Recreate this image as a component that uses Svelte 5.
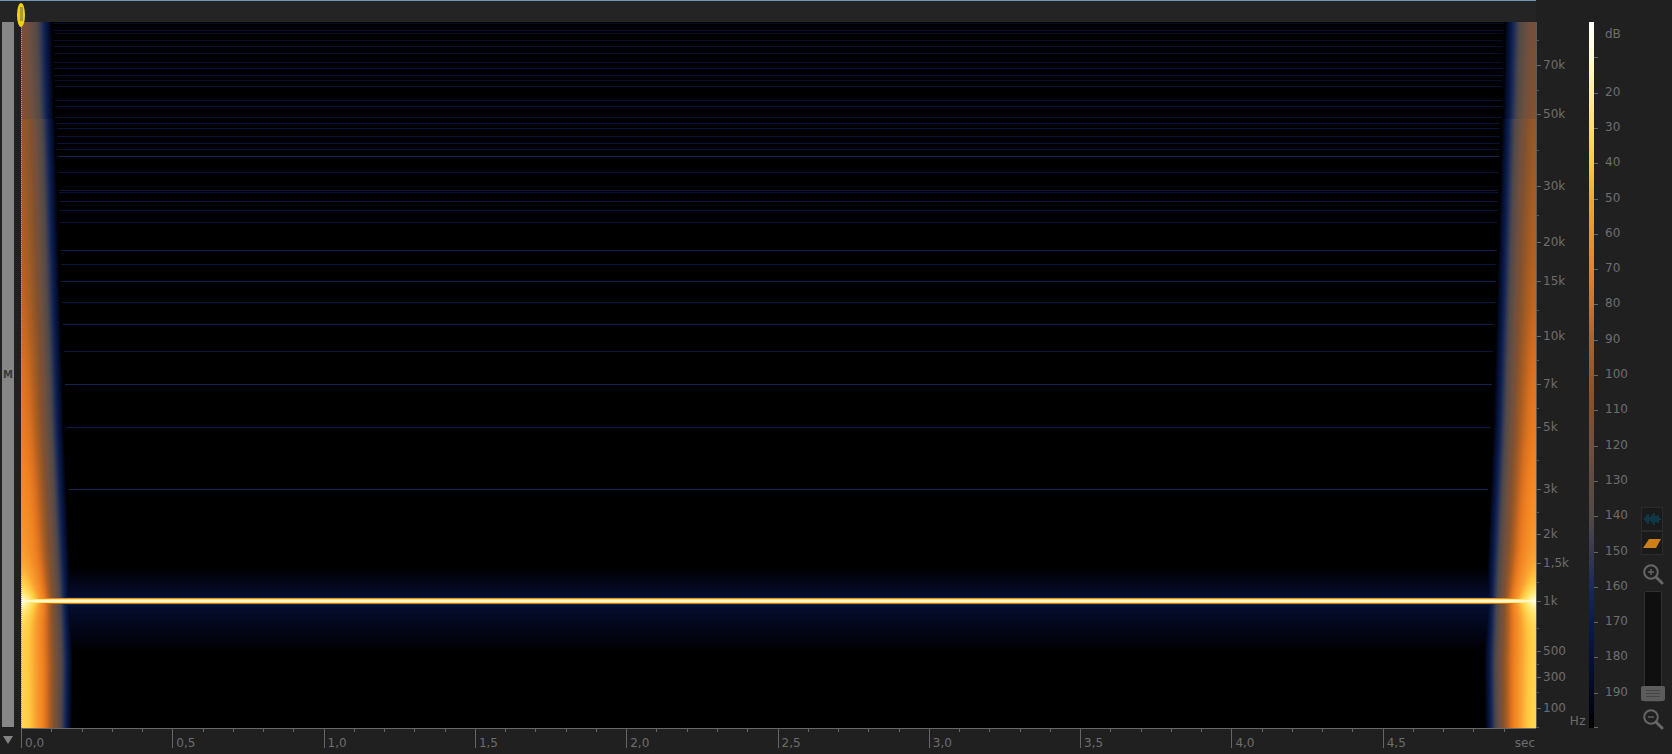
<script>
  import { onMount } from 'svelte'

  const PLOT_Y = 22
  const PLOT_W = 1515
  const PLOT_H = 706

  // colour per dB, read off the scale on the right
  const colors = [
    '#ffffff', '#fffbd8', '#fff090', '#ffe060', '#ffc840', '#faa432', '#f49028',
    '#f08020', '#d87020', '#b46020', '#945828', '#805030', '#705040', '#604c42',
    '#504a48', '#3a3a50', '#1a2a58', '#0a1c48', '#061238', '#040820', '#000000'
  ]

  const hzLabels = [
    ['70k', 65], ['50k', 114], ['30k', 186], ['20k', 242], ['15k', 281], ['10k', 336],
    ['7k', 384], ['5k', 427], ['3k', 489], ['2k', 534], ['1,5k', 563], ['1k', 601],
    ['500', 651], ['300', 677], ['100', 708]
  ]
  const hzMinor = [40, 90, 150, 215, 310, 360, 408, 460, 512, 582, 628, 664, 692, 727]

  const dbLabels = [20, 30, 40, 50, 60, 70, 80, 90, 100, 110, 120, 130, 140, 150, 160, 170, 180, 190]
  const dbY = (db) => 22 + db * 3.53

  const timeLabels = ['0,0', '0,5', '1,0', '1,5', '2,0', '2,5', '3,0', '3,5', '4,0', '4,5']
  const TIME_STEP = 151.3
  const timeMinor = []
  for (let i = 0; i < 50; i++) {
    if (i % 5 !== 0) timeMinor.push(i * TIME_STEP / 5)
  }

  const harmonics = [
    [23, 186], [30, 184], [33, 186], [40, 184], [46, 182], [53, 184], [62, 182], [68, 181],
    [75, 182], [80, 184], [86, 180], [100, 182], [106, 180], [117, 182], [123, 180], [128, 178],
    [136, 180], [143, 178], [149, 180], [156, 164], [172, 182], [190, 178], [192, 180], [201, 176],
    [210, 180], [222, 180], [250, 170], [264, 178], [281, 170], [302, 172], [324, 168],
    [351, 176], [384, 164], [427, 172], [489, 162]
  ]

  // y, dB at the edge of the plot, width of the band until black
  const band = [
    [22, 115, 30], [118, 108, 32], [119, 100, 33], [295, 87, 38], [433, 72, 42],
    [548, 55, 47], [600, 40, 49], [663, 36, 51], [728, 34, 50]
  ]

  const gradient = 'linear-gradient(to bottom,' + colors.join(',') + ')'

  function hex(c) {
    return [1, 3, 5].map((i) => parseInt(c.slice(i, i + 2), 16))
  }

  function buildLut() {
    const lut = []
    const rgb = colors.map(hex)
    for (let i = 0; i <= 2000; i++) {
      const p = i / 100
      const a = Math.min(Math.floor(p), 19)
      const f = p - a
      lut.push(rgb[a].map((v, k) => v + (rgb[a + 1][k] - v) * f))
    }
    return lut
  }

  function bandAt(y) {
    for (let i = 0; i < band.length - 1; i++) {
      const a = band[i]
      const b = band[i + 1]
      if (y <= b[0]) {
        const f = (y - a[0]) / (b[0] - a[0])
        return [a[1] + (b[1] - a[1]) * f, a[2] + (b[2] - a[2]) * f]
      }
    }
    return [band[band.length - 1][1], band[band.length - 1][2]]
  }

  const lineRows = { 597: 172, 598: 65, 599: 25, 600: 12, 601: 12, 602: 25, 603: 80, 604: 168 }

  function rowDb(y) {
    if (lineRows[y] !== undefined) return lineRows[y]
    const d = Math.abs(y - 600.5)
    return 183 + d * (y < 600 ? 0.5 : 0.33)
  }

  let canvas

  onMount(() => {
    const ctx = canvas.getContext('2d')
    const img = ctx.createImageData(PLOT_W, PLOT_H)
    const lut = buildLut()
    const rows = new Array(PLOT_H).fill(200)
    for (const [y, db] of harmonics) rows[y - PLOT_Y] = db

    for (let r = 0; r < PLOT_H; r++) {
      const y = r + PLOT_Y
      const [d0, w] = bandAt(y)
      const line = rowDb(y)
      const glow = Math.exp(-Math.abs(y - 600.5) / 14)
      for (let c = 0; c < PLOT_W; c++) {
        const edge = Math.min(c, PLOT_W - 1 - c)
        const t = edge / w
        let db = 200
        if (t < 1) {
          db = d0 + (197 - d0) * Math.pow(t, 1.8)
          db -= 34 * glow * Math.max(0, 1 - t * 1.5)
          if (db < 4) db = 4
        }
        db = Math.min(db, line)
        if (t > 1.06) db = Math.min(db, rows[r])
        const px = lut[Math.round(Math.min(db, 200) * 10)]
        const i = (r * PLOT_W + c) * 4
        img.data[i] = px[0]
        img.data[i + 1] = px[1]
        img.data[i + 2] = px[2]
        img.data[i + 3] = 255
      }
    }
    ctx.putImageData(img, 0, 0)
  })
</script>

<div class="screen">
  <div class="topbar">
    <div class="marker"><span></span></div>
  </div>

  <div class="strip"><span>M</span></div>

  <div class="plot">
    <canvas bind:this={canvas} width={PLOT_W} height={PLOT_H}></canvas>
    <i class="playhead"></i>
  </div>

  <div class="side">
    <div class="hz-axis">
      {#each hzMinor as y}
        <i class="tick minor" style="top:{y - PLOT_Y}px"></i>
      {/each}
      {#each hzLabels as [label, y]}
        <i class="tick" style="top:{y - PLOT_Y}px"></i>
        <span class="label" style="top:{y - PLOT_Y}px">{label}</span>
      {/each}
      <span class="unit">Hz</span>
    </div>

    <div class="db-bar" style="background:{gradient}"></div>

    <div class="db-axis">
      <span class="label" style="top:{35 - PLOT_Y}px">dB</span>
      <i class="tick" style="top:{dbY(10) - PLOT_Y}px"></i>
      {#each dbLabels as db}
        <i class="tick" style="top:{dbY(db) - PLOT_Y}px"></i>
        <span class="label" style="top:{dbY(db) - PLOT_Y}px">{db}</span>
      {/each}
      <i class="tick" style="top:705px"></i>
    </div>

    <div class="tools">
      <div class="view-buttons">
        <div class="view-btn">
          <svg width="18" height="14" viewBox="0 0 18 14" fill="none" stroke="#0c4458" stroke-width="1.4">
            <path d="M1 7h1M3 4v6M5 2v10M7 5v4M9 3v8M11 1v12M13 4v6M15 3v8M17 6v2" />
          </svg>
        </div>
        <div class="view-btn">
          <svg width="18" height="10" viewBox="0 0 18 10">
            <path d="M0 10 6 1h12l-5 9z" fill="#cc7f16" />
          </svg>
        </div>
      </div>

      <svg class="zoom" width="22" height="22" viewBox="0 0 22 22" fill="none" stroke="#666">
        <circle cx="9" cy="9" r="6.8" stroke-width="2" />
        <path d="M14 14l6 6" stroke-width="3" stroke-linecap="round" />
        <path d="M6 9h6M9 6v6" stroke-width="1.4" />
      </svg>

      <div class="slider">
        <div class="thumb"><i></i><i></i><i></i></div>
      </div>

      <svg class="zoom zoom-out" width="22" height="22" viewBox="0 0 22 22" fill="none" stroke="#666">
        <circle cx="9" cy="9" r="6.8" stroke-width="2" />
        <path d="M14 14l6 6" stroke-width="3" stroke-linecap="round" />
        <path d="M6 9h6" stroke-width="1.4" />
      </svg>
    </div>
  </div>

  <div class="corner"><i></i></div>

  <div class="time-axis">
    {#each timeMinor as x}
      <i class="t-minor" style="left:{x}px"></i>
    {/each}
    {#each timeLabels as label, n}
      <div class="t-major" style="left:{n * TIME_STEP}px"><span>{label}</span></div>
    {/each}
    <span class="sec">sec</span>
  </div>
</div>

<style>
  :global(body) {
    background: #202020;
  }

  .screen {
    display: grid;
    grid-template-columns: 21px 1515px 136px;
    grid-template-rows: 22px 706px 26px;
    width: 1672px;
    height: 754px;
    overflow: hidden;
    background: #202020;
    color: #6e6e6e;
    font-family: "DejaVu Sans", sans-serif;
    font-size: 12px;
    filter: blur(0.35px);
  }

  i {
    display: block;
  }

  .topbar {
    grid-row: 1;
    grid-column: 1 / 3;
    position: relative;
    background: #242424;
    border-top: 1px solid #7196b8;
    box-sizing: border-box;
  }

  .marker {
    position: absolute;
    left: 17px;
    top: 2px;
    width: 8px;
    height: 24px;
    border-radius: 50%;
    background: #f0d208;
    z-index: 2;
    display: flex;
    justify-content: center;
    padding-top: 4px;
    box-sizing: border-box;
  }

  .marker span {
    width: 3px;
    height: 14px;
    background: #a89a38;
  }

  .strip {
    grid-row: 2;
    grid-column: 1;
    padding-left: 2px;
    display: flex;
  }

  .strip span {
    width: 12px;
    height: 705px;
    background: #868686;
    color: #3a3a3a;
    font-size: 10px;
    font-weight: bold;
    line-height: 12px;
    text-align: center;
    padding-top: 347px;
    box-sizing: border-box;
  }

  .plot {
    grid-row: 2;
    grid-column: 2;
    position: relative;
  }

  canvas {
    display: block;
  }

  .playhead {
    position: absolute;
    left: 0;
    top: 0;
    bottom: 0;
    border-left: 1px dotted #c89a40;
  }

  .side {
    grid-row: 2;
    grid-column: 3;
    display: flex;
    align-items: stretch;
  }

  .hz-axis {
    position: relative;
    width: 53px;
    border-left: 1px solid #5a5a5a;
    box-sizing: border-box;
  }

  .hz-axis .tick {
    position: absolute;
    left: 0;
    width: 4px;
    height: 1px;
    background: #666;
  }

  .hz-axis .tick.minor {
    width: 2px;
    background: #555;
  }

  .hz-axis .label {
    position: absolute;
    left: 6px;
    line-height: 14px;
    transform: translateY(-7px);
  }

  .unit {
    position: absolute;
    right: 3px;
    top: 692px;
    line-height: 14px;
    letter-spacing: 0.5px;
  }

  .db-bar {
    width: 5px;
  }

  .db-axis {
    position: relative;
    width: 47px;
  }

  .db-axis .tick {
    position: absolute;
    left: 0;
    width: 4px;
    height: 1px;
    background: #666;
  }

  .db-axis .label {
    position: absolute;
    left: 11px;
    line-height: 14px;
    transform: translateY(-8px);
  }

  .tools {
    width: 24px;
    padding-top: 485px;
    display: flex;
    flex-direction: column;
    align-items: center;
  }

  .view-buttons {
    width: 22px;
    display: flex;
    flex-direction: column;
    margin-left: -2px;
  }

  .view-btn {
    height: 24px;
    display: flex;
    align-items: center;
    justify-content: center;
    background: #1a1a1a;
    border: 1px solid #2b2b2b;
    box-sizing: border-box;
  }

  .zoom {
    margin-top: 8px;
    flex: none;
  }

  .zoom-out {
    margin-top: 6px;
  }

  .slider {
    position: relative;
    width: 18px;
    height: 111px;
    margin-top: 6px;
    flex: none;
    background: #0f0f0f;
    border: 1px solid #303030;
    box-sizing: border-box;
    border-radius: 2px;
    display: flex;
    align-items: flex-end;
    justify-content: center;
  }

  .thumb {
    width: 24px;
    height: 15px;
    flex: none;
    background: #5c5c5c;
    border-radius: 2px;
    display: flex;
    flex-direction: column;
    justify-content: center;
    align-items: center;
    gap: 2px;
  }

  .thumb i {
    width: 14px;
    height: 1px;
    background: #444;
  }

  .corner {
    grid-row: 3;
    grid-column: 1;
    padding: 8px 0 0 3px;
  }

  .corner i {
    width: 0;
    height: 0;
    border-left: 5px solid transparent;
    border-right: 5px solid transparent;
    border-top: 8px solid #848484;
  }

  .time-axis {
    grid-row: 3;
    grid-column: 2;
    position: relative;
    border-top: 1px solid #686868;
    box-sizing: border-box;
  }

  .t-minor {
    position: absolute;
    top: 0;
    width: 1px;
    height: 3px;
    background: #666;
  }

  .t-major {
    position: absolute;
    top: 0;
    height: 19px;
    border-left: 1px solid #666;
    padding-left: 3px;
    line-height: 14px;
  }

  .t-major span {
    display: block;
    padding-top: 7px;
  }

  .sec {
    position: absolute;
    right: 1px;
    top: 7px;
    line-height: 14px;
  }
</style>
